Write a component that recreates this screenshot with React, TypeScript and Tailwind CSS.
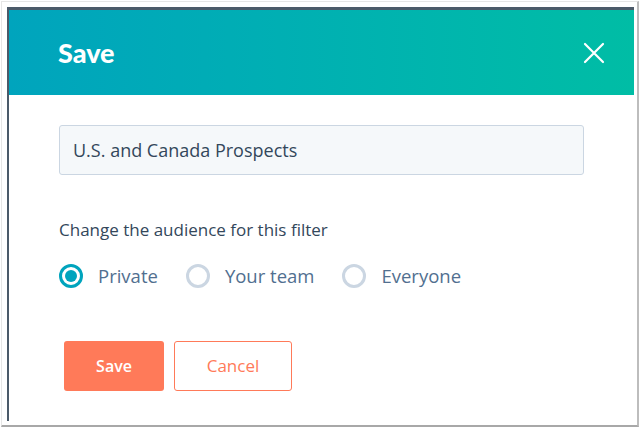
import React from 'react';

const options = ['Private', 'Your team', 'Everyone'];

function Radio({ checked }: { checked: boolean }) {
  return checked ? (
    <span className="flex h-[24px] w-[24px] items-center justify-center rounded-full border-[3px] border-[#00a4bd]">
      <span className="h-[12px] w-[12px] rounded-full bg-[#00a4bd]" />
    </span>
  ) : (
    <span className="h-[24px] w-[24px] rounded-full border-[3px] border-[#cbd6e2]" />
  );
}

export default function App() {
  const [audience, setAudience] = React.useState('Private');
  const [name, setName] = React.useState('U.S. and Canada Prospects');

  return (
    <div className="h-[429px] w-[641px] bg-white pl-px pt-px" style={{ fontFamily: '"Open Sans", "Noto Sans", sans-serif' }}>
      <div className="h-[426px] w-[638px] border-l border-t border-r-2 border-b-2 border-l-[#e6e6e6] border-t-[#e6e6e6] border-r-[#bdbdbd] border-b-[#a8a8a8] pl-[5px] pt-[5px]">
        <div className="flex h-[414px] w-[627px] flex-col border-l-2 border-t-[3px] border-[#4b5a69] bg-white">
          {/* Header */}
          <div className="flex h-[85px] shrink-0 items-center justify-between bg-gradient-to-r from-[#00a4bd] to-[#00bda5] pl-[49px] pr-[28px]">
            <h2 className="font-['Lato',sans-serif] text-[27px] font-black leading-none text-white">Save</h2>
            <button className="flex h-[24px] w-[24px] items-center justify-center text-white">
              <svg width="22" height="22" viewBox="0 0 22 22" fill="none" stroke="currentColor" strokeWidth="2.2" strokeLinecap="round">
                <path d="M2 2L20 20M20 2L2 20" />
              </svg>
            </button>
          </div>

          {/* Body */}
          <div className="flex flex-col pl-[50px] pt-[30px]">
            <input
              value={name}
              onChange={(e) => setName(e.target.value)}
              className="h-[50px] w-[525px] rounded-[3px] border border-[#cbd6e2] bg-[#f5f8fa] px-[13px] text-[18px] text-[#33475b] outline-none"
            />

            <p className="mt-[46px] text-[17px] leading-none text-[#33475b]">Change the audience for this filter</p>

            <div className="mt-[26px] flex items-center gap-[28px]">
              {options.map((opt) => (
                <label key={opt} className="flex cursor-pointer items-center gap-[15px]" onClick={() => setAudience(opt)}>
                  <Radio checked={audience === opt} />
                  <span className="text-[18.5px] leading-none text-[#516f90]">{opt}</span>
                </label>
              ))}
            </div>

            <div className="ml-[5px] mt-[53px] flex gap-[10px]">
              <button className="h-[50px] w-[100px] rounded-[3px] bg-[#ff7a59] text-[16px] font-semibold text-white">Save</button>
              <button className="h-[50px] w-[118px] rounded-[3px] border border-[#ff7a59] bg-white text-[17px] text-[#ff7a59]">
                Cancel
              </button>
            </div>
          </div>
        </div>
      </div>
    </div>
  );
}
